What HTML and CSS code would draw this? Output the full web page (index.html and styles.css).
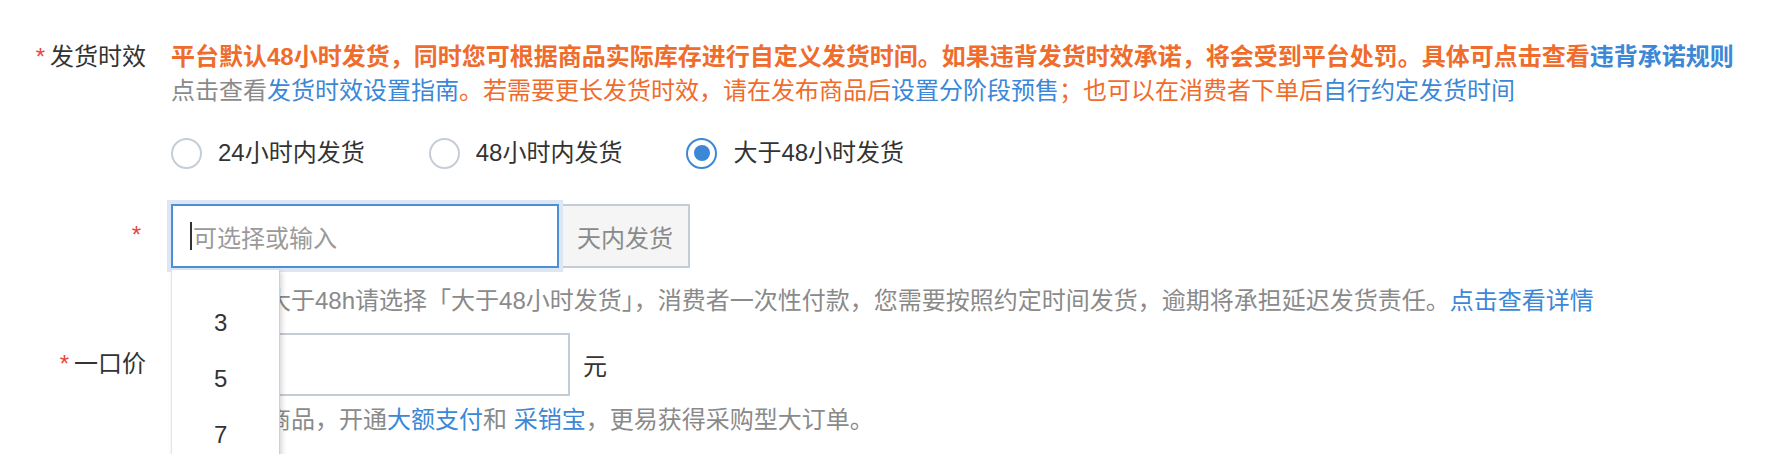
FILE: index.html
```html
<!DOCTYPE html>
<html lang="zh-CN">
<head>
<meta charset="utf-8">
<title>发货时效</title>
<link rel="stylesheet" href="styles.css">
</head>
<body>
<div class="form">
  <div class="row">
    <div class="label"><span class="star">*</span>发货时效</div>
    <div class="content">
      <div class="desc">
        <span class="warn-strong">平台默认48小时发货，同时您可根据商品实际库存进行自定义发货时间。如果违背发货时效承诺，将会受到平台处罚。具体可点击查看</span><a class="link link-strong">违背承诺规则</a><br>
        <span class="muted">点击查看</span><a class="link">发货时效设置指南</a><span class="warn">。若需要更长发货时效，请在发布商品后</span><a class="link">设置分阶段预售</a><span class="warn">；也可以在消费者下单后</span><a class="link">自行约定发货时间</a>
      </div>
      <div class="radios">
        <div class="radio"><span class="radio-circle"></span><span>24小时内发货</span></div>
        <div class="radio"><span class="radio-circle"></span><span>48小时内发货</span></div>
        <div class="radio checked"><span class="radio-circle"></span><span>大于48小时发货</span></div>
      </div>
    </div>
  </div>

  <div class="row row-days">
    <div class="label label-field"><span class="star">*</span></div>
    <div class="content">
      <div class="field-line">
        <div class="combo">
          <div class="input focused"><span class="caret"></span><span class="placeholder">可选择或输入</span></div>
          <div class="dropdown">
            <div class="option">3</div>
            <div class="option">5</div>
            <div class="option">7</div>
            <div class="option">10</div>
          </div>
        </div>
        <div class="addon">天内发货</div>
      </div>
      <div class="help"><span class="muted">如果时效大于48h请选择「大于48小时发货」，消费者一次性付款，您需要按照约定时间发货，逾期将承担延迟发货责任。</span><a class="link">点击查看详情</a></div>
    </div>
  </div>

  <div class="row row-price">
    <div class="label label-field"><span class="star">*</span>一口价</div>
    <div class="content">
      <div class="field-line">
        <div class="input price"></div>
        <span class="unit">元</span>
      </div>
      <div class="help help-bottom"><span class="muted">工业品类商品，开通</span><a class="link">大额支付</a><span class="muted">和 </span><a class="link">采销宝</a><span class="muted">，更易获得采购型大订单。</span></div>
    </div>
  </div>
</div>
</body>
</html>
```
FILE: styles.css
```css
html, body {
  margin: 0;
  padding: 0;
}
body {
  background: #ffffff;
  font-family: "Liberation Sans", "Noto Sans CJK SC", sans-serif;
  font-size: 24px;
  color: #333333;
  height: 454px;
  overflow: hidden;
}
.form {
  padding-top: 40px;
}
.row {
  display: flex;
  align-items: flex-start;
}
.label {
  width: 146px;
  flex: none;
  text-align: right;
  line-height: 34px;
  margin-right: 25px;
  color: #333333;
}
.label-field {
  padding-top: 14px;
}
.star {
  color: #e8453c;
  margin-right: 5px;
}
.content {
  flex: 1;
  min-width: 0;
}
.desc {
  line-height: 34px;
  white-space: nowrap;
}
.warn-strong {
  color: #ef6c2c;
  font-weight: 700;
}
.warn {
  color: #ef6c2c;
}
.muted {
  color: #8a8a8a;
}
.link {
  color: #3c87d6;
  text-decoration: none;
}
.link-strong {
  font-weight: 700;
}
.radios {
  display: flex;
  gap: 64px;
  margin-top: 28px;
}
.radio {
  display: flex;
  align-items: center;
  gap: 16px;
  line-height: 34px;
  color: #333333;
}
.radio-circle {
  width: 31px;
  height: 31px;
  box-sizing: border-box;
  border: 2px solid #c6cdd6;
  border-radius: 50%;
  display: flex;
  align-items: center;
  justify-content: center;
  background: #ffffff;
}
.radio.checked .radio-circle {
  border-color: #3c87d6;
}
.radio.checked .radio-circle::after {
  content: "";
  width: 16px;
  height: 16px;
  border-radius: 50%;
  background: #3c87d6;
}
.row-days {
  margin-top: 34px;
}
.field-line {
  display: flex;
  align-items: center;
}
.combo {
  position: relative;
}
.input {
  box-sizing: border-box;
  width: 388px;
  height: 64px;
  border: 2px solid #c3cdd8;
  background: #ffffff;
  display: flex;
  align-items: center;
  padding-left: 17px;
}
.input.focused {
  border-color: #4a8fd8;
  box-shadow: 0 0 0 4px #dce7f3;
  position: relative;
  z-index: 1;
}
.caret {
  width: 2px;
  height: 28px;
  background: #333333;
  margin-right: 1px;
}
.placeholder {
  color: #9a9a9a;
}
.addon {
  box-sizing: border-box;
  width: 131px;
  height: 64px;
  border: 2px solid #c3cdd8;
  border-left: none;
  background: #f5f5f5;
  color: #8a8a8a;
  display: flex;
  align-items: center;
  padding-left: 18px;
}
.dropdown {
  position: absolute;
  left: 0;
  top: calc(100% + 2px);
  width: 109px;
  height: 260px;
  box-sizing: border-box;
  background: #ffffff;
  border-left: 1px solid #dde4ec;
  border-right: 1px solid #c9d1da;
  box-shadow: 2px 2px 5px rgba(0, 0, 0, 0.16);
  padding-top: 25px;
  z-index: 5;
}
.option {
  height: 56px;
  line-height: 56px;
  padding-left: 42px;
  color: #333333;
}
.help {
  margin-top: 16px;
  line-height: 34px;
  white-space: nowrap;
}
.row-price {
  margin-top: 15px;
}
.input.price {
  width: 399px;
  height: 63px;
}
.unit {
  margin-left: 13px;
  color: #333333;
}
.help-bottom {
  margin-top: 7px;
}
```
